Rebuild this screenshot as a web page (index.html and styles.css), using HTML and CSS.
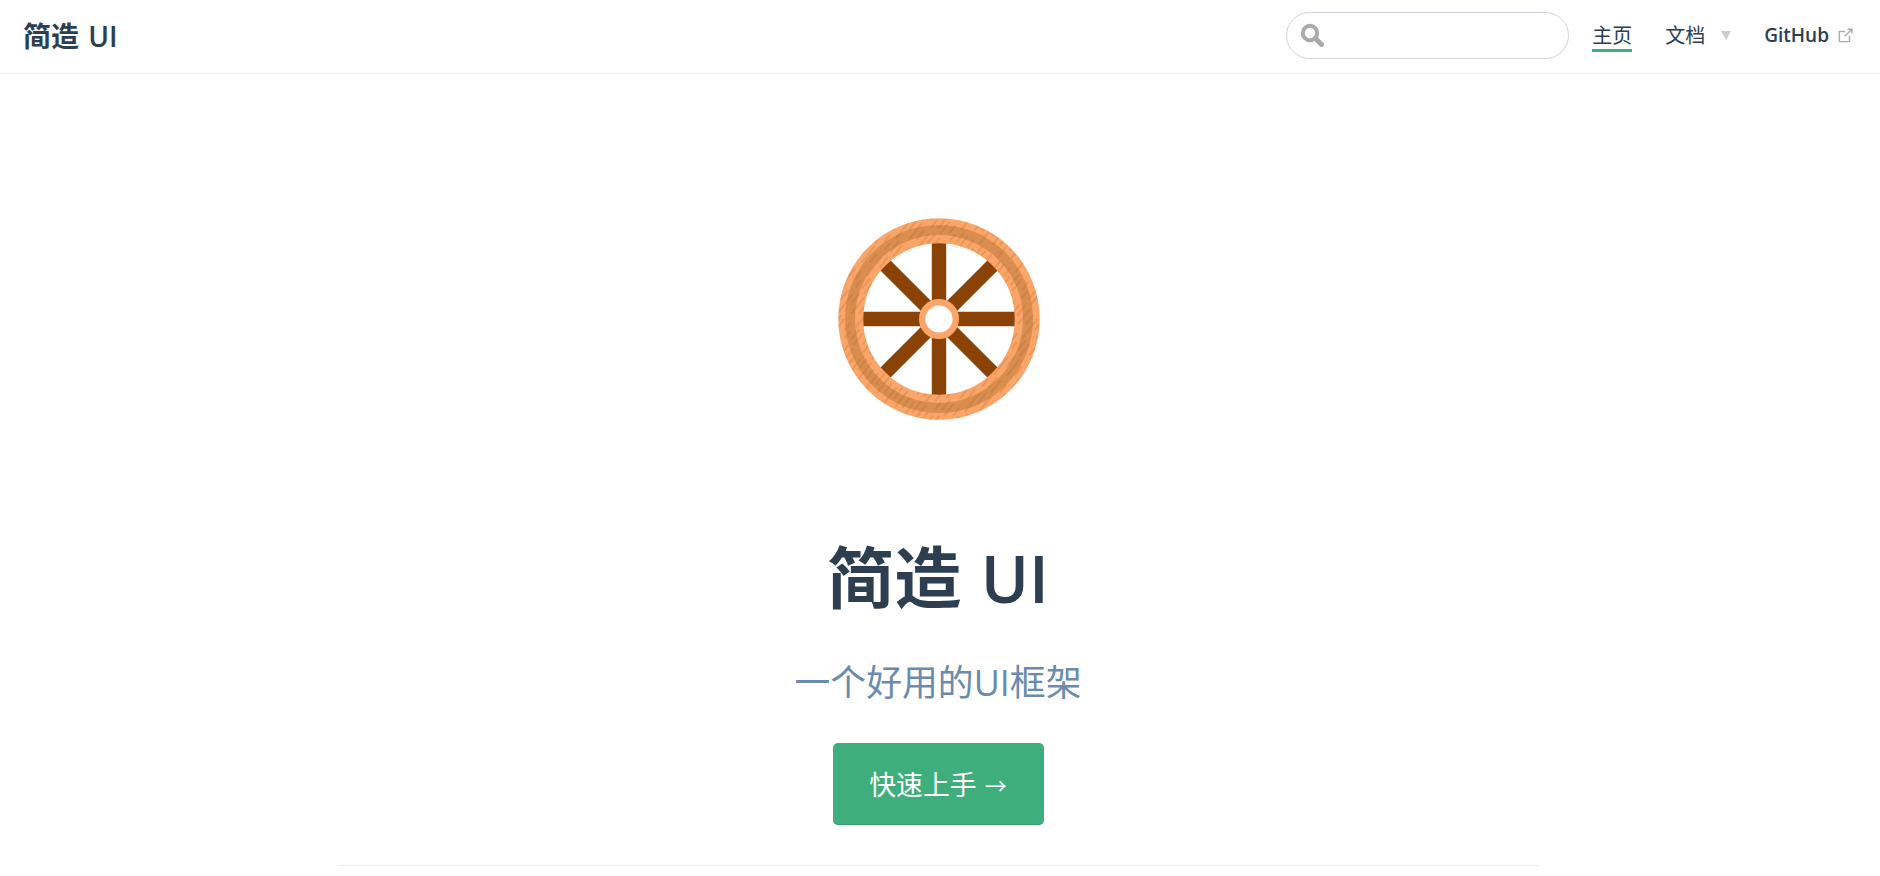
FILE: index.html
```html
<!DOCTYPE html>
<html lang="zh-CN">
<head>
<meta charset="utf-8">
<title>简造 UI</title>
<link rel="stylesheet" href="styles.css">
</head>
<body>
<header class="navbar">
  <a class="brand" href="#">简造 <span class="latin">UI</span></a>
  <div class="nav-right">
    <label class="search">
      <svg class="search-icon" viewBox="0 0 24 24" width="24" height="24"><circle cx="10" cy="10" r="7.2" fill="none" stroke="#aaa" stroke-width="4"/><path d="M15.2 15.2 L21.5 21.5" stroke="#aaa" stroke-width="5" stroke-linecap="round"/></svg>
      <input class="search-input" type="text" aria-label="搜索">
    </label>
    <nav class="nav-links">
      <a class="nav-link active" href="#">主页</a>
      <a class="nav-link dropdown" href="#">文档<span class="caret"></span></a>
      <a class="nav-link github" href="#">GitHub<svg class="ext" viewBox="0 0 100 100" width="18" height="18"><path fill="#aaa" d="M18.8 85.1h56c2.2 0 4-1.8 4-4v-32h-8v28h-48v-48h28v-8h-32c-2.2 0-4 1.8-4 4v56c0 2.2 1.8 4 4 4z"/><path fill="#aaa" d="M45.7 48.7l5.6 5.6 32.7-32.7v14.4h8v-28H64v8h14.3z"/></svg></a>
    </nav>
  </div>
</header>
<main class="home">
  <section class="hero">
    <svg class="wheel" viewBox="-1 0 240 240" width="240" height="240">
      <defs>
        <pattern id="grain" patternUnits="userSpaceOnUse" width="47" height="23" patternTransform="rotate(-52)">
          <path d="M0 2h15M24 4h20M6 9h10M28 10h12M0 14h9M16 16h24M3 20h13M30 21h14" stroke="#a05a22" stroke-width=".55" fill="none" opacity=".75"/>
        </pattern>
        <mask id="ring">
          <rect x="-1" width="240" height="240" fill="#000"/>
          <circle cx="120" cy="120" r="100.7" fill="#fff"/>
          <circle cx="120" cy="120" r="75.7" fill="#000"/>
        </mask>
      </defs>
      <g stroke="#8a4207" stroke-width="14.4">
        <path d="M120 44V196M44 120H196M66 66L174 174M174 66L66 174"/>
      </g>
      <circle cx="120" cy="120" r="88.2" fill="none" stroke="#fba568" stroke-width="25"/>
      <circle cx="120" cy="120" r="89" fill="none" stroke="#d98d4e" stroke-width="10"/>
      <rect x="-1" width="240" height="240" fill="url(#grain)" mask="url(#ring)"/>
      <circle cx="120" cy="120" r="16.8" fill="#fff" stroke="#fba568" stroke-width="6.4"/>
    </svg>
    <h1 class="title">简造 <span class="latin">UI</span></h1>
    <p class="tagline">一个好用的UI框架</p>
    <a class="cta" href="#">快速上手 <span class="arrow">→</span></a>
  </section>
  <hr class="divider">
</main>
</body>
</html>
```
FILE: styles.css
```css
* { box-sizing: border-box; }
html, body { margin: 0; padding: 0; background: #fff; }
body {
  font-family: "Open Sans", "Noto Sans CJK SC", sans-serif;
  color: #2c3e50;
  height: 876px;
  overflow: hidden;
}
a { color: inherit; text-decoration: none; }

.navbar {
  height: 74px;
  border-bottom: 1px solid #eaecef;
  display: flex;
  align-items: center;
  justify-content: space-between;
  padding: 0 26px 2px 23px;
}
.brand { font-size: 28px; font-weight: 700; margin-bottom: 2px; }
.brand .latin { font-weight: 600; margin-left: 2px; }
.nav-right { display: flex; align-items: center; gap: 23px; }

.search {
  position: relative;
  display: block;
  width: 283px;
  height: 47px;
}
.search-icon { position: absolute; left: 14px; top: 11px; }
.search-input {
  width: 100%;
  height: 100%;
  border: 1px solid #cfd4db;
  border-radius: 24px;
  background: #fff;
  outline: none;
}

.nav-links { display: flex; align-items: center; gap: 33px; font-size: 20px; }
.nav-link { display: flex; align-items: center; line-height: 27px; }
.nav-link.active { border-bottom: 3px solid #3eaf7c; margin-bottom: -3px; }
.caret {
  width: 0;
  height: 0;
  margin-left: 16px;
  border-left: 5.5px solid transparent;
  border-right: 5.5px solid transparent;
  border-top: 9px solid #ccc;
}
.github { font-size: 19px; font-weight: 600; }
.ext { margin-left: 7px; }

.home { width: 1200px; margin-left: 338px; }
.hero { display: flex; flex-direction: column; align-items: center; padding-top: 125px; }
.wheel { display: block; }
.title {
  margin: 96px 0 0;
  font-size: 67.2px;
  line-height: 85px;
  font-weight: 700;
}
.title .latin { font-weight: 600; font-size: 65px; margin-left: 2px; }
.tagline {
  margin: 37px 0 0;
  font-size: 35.84px;
  line-height: 50px;
  color: #6a8bad;
}
.cta {
  margin-top: 35px;
  width: 211px;
  height: 82px;
  display: flex;
  align-items: center;
  justify-content: center;
  gap: 8px;
  font-size: 26.88px;
  color: #fff;
  background: #3eaf7c;
  border-bottom: 1px solid #389d70;
  border-radius: 5px;
}
.arrow { font-size: 22px; }
.divider { margin: 40px 0 0; border: 0; border-top: 1px solid #eaecef; }
```
